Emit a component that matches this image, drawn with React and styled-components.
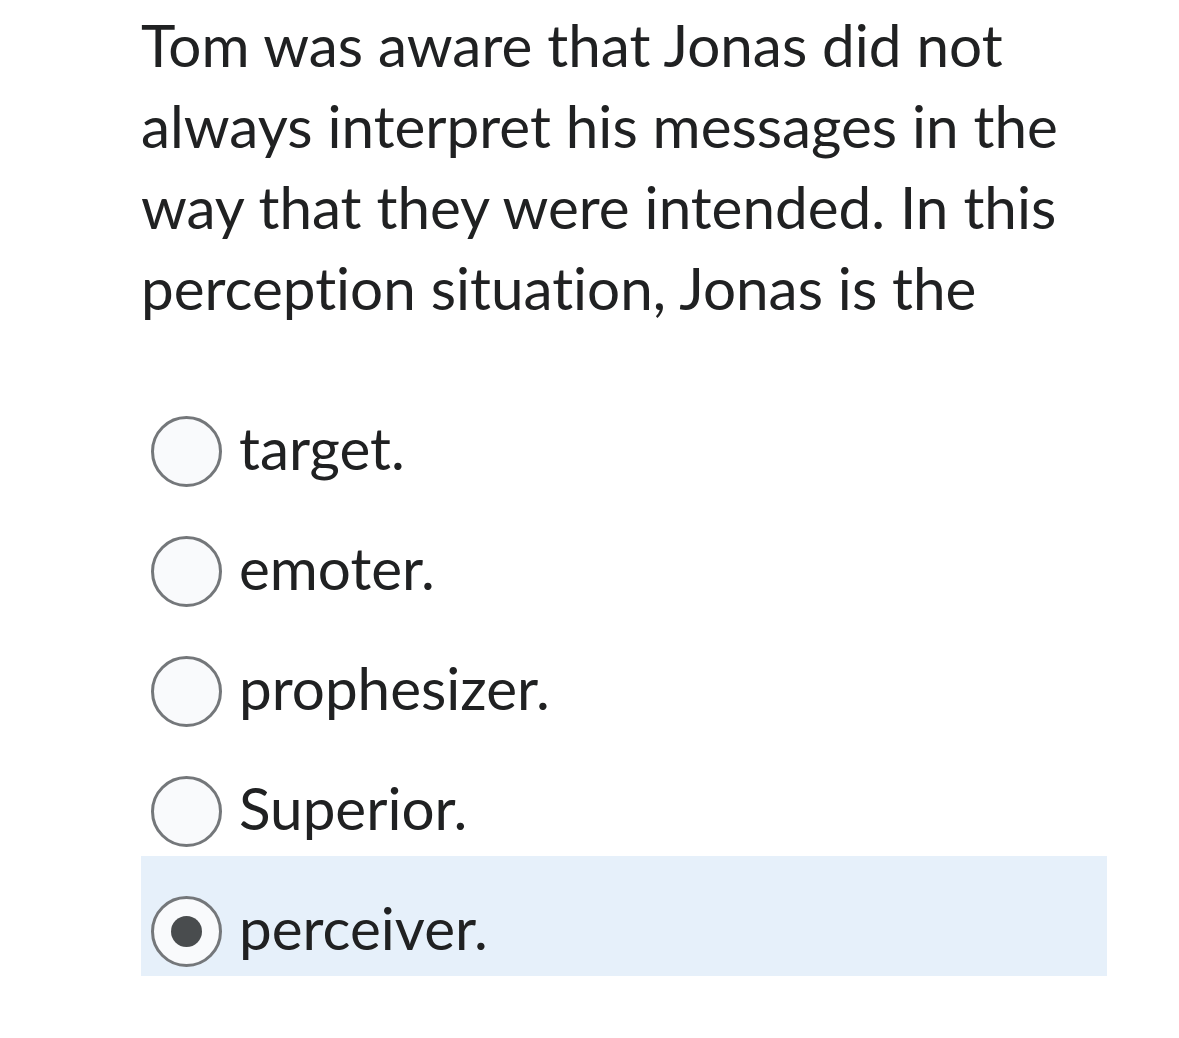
import React, {useState} from 'react';
import styled, {createGlobalStyle} from 'styled-components';

const GlobalStyle = createGlobalStyle`
  html, body {
    margin: 0;
    padding: 0;
    background: #fff;
  }
  body {
    font-family: Lato, "Noto Sans", sans-serif;
    color: #202122;
    font-variant-ligatures: none;
  }
`;

const Page = styled.div`
  width: 966px;
  padding: 4px 0 0 141px;
`;

const Question = styled.p`
  margin: 0 0 48px 0;
  font-size: 58.4px;
  line-height: 81px;
  width: 950px;
`;

const Options = styled.div`
  display: flex;
  flex-direction: column;
`;

const Option = styled.label`
  box-sizing: border-box;
  display: flex;
  align-items: center;
  gap: 17px;
  height: 120px;
  padding: 30px 0 0 10px;
  background: ${props => props.$selected ? '#e6f0fa' : 'transparent'};
  cursor: pointer;
`;

const Radio = styled.span`
  box-sizing: border-box;
  width: 71px;
  height: 71px;
  border-radius: 50%;
  border: 3px solid #74777a;
  background: #f9fafc;
  display: flex;
  align-items: center;
  justify-content: center;
  flex-shrink: 0;

  &::after {
    content: '';
    display: ${props => props.$checked ? 'block' : 'none'};
    width: 31px;
    height: 31px;
    border-radius: 50%;
    background: #494c4e;
  }
`;

const OptionText = styled.span`
  font-size: 58.4px;
  line-height: 1;
  margin-bottom: 8px;
  color: #202122;
`;

const answers = ['target.', 'emoter.', 'prophesizer.', 'Superior.', 'perceiver.'];

const App = () => {
  const [selected, setSelected] = useState(4);
  return (
    <Page>
      <GlobalStyle/>
      <Question>
        Tom was aware that Jonas did not always interpret his messages in the way that they were intended. In this perception situation, Jonas is the
      </Question>
      <Options>
        {answers.map((a, i) => (
          <Option key={a} $selected={selected === i} onClick={() => setSelected(i)}>
            <Radio $checked={selected === i}/>
            <OptionText>{a}</OptionText>
          </Option>
        ))}
      </Options>
    </Page>
  );
};

export default App;
